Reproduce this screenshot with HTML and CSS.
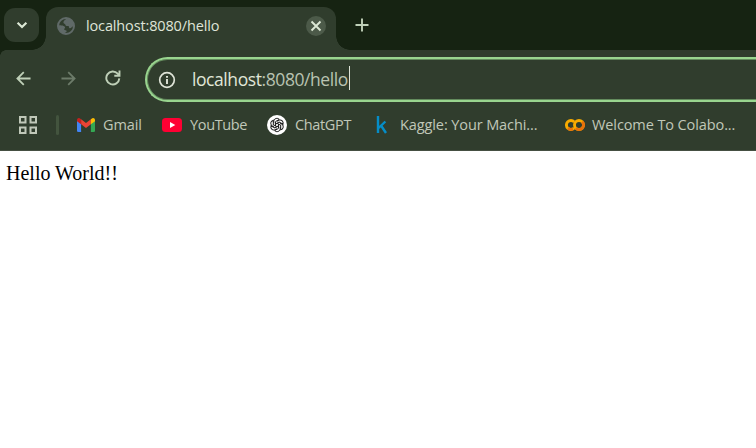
FILE: index.html
```
<!DOCTYPE html>
<html lang="en">
<head>
<meta charset="utf-8">
<title>localhost:8080/hello</title>
<link rel="stylesheet" href="styles.css">
</head>
<body>
<div class="tabstrip">
  <div class="tab-search"><svg width="14" height="14" viewBox="0 0 14 14"><path d="M2.6 4.7 7 9l4.400-4.300" fill="none" stroke="#dce8d5" stroke-width="2.200"/></svg></div>
  <div class="tab">
    <svg class="globe" width="18" height="18" viewBox="0 0 18 18"><circle cx="9" cy="9" r="8" fill="none" stroke="#606a68" stroke-width="2"/><path d="M10.500 1C8 3 6.500 3.500 6.400 5.400c0 1.300 2.100 1 2.100 2.500 0 1.400 2.200.6 3 1.200 1 .8 0 2 1.300 2.200 1.500.2 2-1.800 4.200-2.300C17 4 14 1 10.500 1ZM1 8.200c3 0 7 .2 7.100 2.400 0 1-.9.8-1 1.700-.1 1 2.600.7 2.600 2 0 1.200-2.200 1.100-2.400 2.500C3 16 1 12.500 1 8.200Z" fill="#606a68"/></svg>
    <span class="tab-title">localhost:8080/hello</span>
    <div class="close"><svg width="12" height="12" viewBox="0 0 12 12"><path d="m1.500 1.500 9 9m0-9-9 9" stroke="#dce8d5" stroke-width="1.900"/></svg></div>
  </div>
  <svg class="plus" width="14" height="14" viewBox="0 0 14 14"><path d="M7 .5v13M.5 7h13" stroke="#bfd0b8" stroke-width="1.900"/></svg>
</div>
<div class="toolbar">
  <svg class="nav" width="15" height="15" viewBox="0 0 16 16"><path d="M15.500 8H2M8.300 1.200 1.500 8l6.800 6.800" fill="none" stroke="#bfd0b8" stroke-width="1.900"/></svg>
  <svg class="nav" width="15" height="15" viewBox="0 0 16 16"><path d="M.5 8H14M7.700 1.200 14.500 8l-6.800 6.800" fill="none" stroke="#6c7b69" stroke-width="1.900"/></svg>
  <svg class="nav" width="16" height="16" viewBox="0 0 16 16"><path d="M14.300 8.400A6.500 6.500 0 1 1 12.700 3.700L14.400 5.400M14.500.5V5.800H9.300" fill="none" stroke="#bfd0b8" stroke-width="1.900"/></svg>
  <div class="omnibox">
    <svg width="18" height="18" viewBox="0 0 18 18"><circle cx="9" cy="9" r="7.300" fill="none" stroke="#dfe4d8" stroke-width="1.700"/><path d="M9 8v5M9 5v1.800" stroke="#dfe4d8" stroke-width="1.900"/></svg>
    <span class="url"><b>localhost</b>:8080/hello</span><i class="caret"></i>
  </div>
</div>
<div class="bookmarks">
  <svg class="apps" width="18" height="18" viewBox="0 0 18 18"><path d="M1 1h5.500v5.500H1zM11.500 1H17v5.500h-5.500zM1 11.500h5.500V17H1zM11.500 11.500H17V17h-5.500z" fill="none" stroke="#c0c8b9" stroke-width="2"/></svg>
  <i class="divider"></i>
  <div class="bm gmail"><svg width="18" height="14" viewBox="0 0 18 14"><path d="M0 2.500 4.100 5.500V14H1.300Q0 14 0 12.700Z" fill="#4285f4"/><path d="M13.900 5.500 18 2.500V12.700Q18 14 16.700 14H13.900Z" fill="#34a853"/><path d="M4.100 1.300 9 5l4.900-3.700v5L9 10 4.100 6.300Z" fill="#ea4335"/><path d="M0 2.200C0 .2 2-.5 3.400.7L4.100 1.300v5L0 3.300Z" fill="#c5221f"/><path d="M18 2.200C18 .2 16-.5 14.600.7l-.7.600v5L18 3.300Z" fill="#fbbc04"/></svg><span>Gmail</span></div>
  <div class="bm youtube"><svg width="20" height="14" viewBox="0 0 20 14"><rect width="20" height="14" rx="3.500" fill="#ff0033"/><path d="m8 4 5.300 3L8 10Z" fill="#fff"/></svg><span>YouTube</span></div>
  <div class="bm chatgpt"><svg width="20" height="20" viewBox="-10 -10 20 20"><defs><path id="petal" d="M-3.200-1.700V-4.200A3.200 3.200 0 0 1 2.300-5.600L-1.500-3.400V1.100"/></defs><circle r="10" fill="#fff"/><g fill="none" stroke="#202020" stroke-width="1"><use href="#petal"/><use href="#petal" transform="rotate(60)"/><use href="#petal" transform="rotate(120)"/><use href="#petal" transform="rotate(180)"/><use href="#petal" transform="rotate(240)"/><use href="#petal" transform="rotate(300)"/></g></svg><span>ChatGPT</span></div>
  <div class="bm kaggle"><svg width="11" height="18" viewBox="0 0 11 18"><path d="M2 0V17M9.400 5.500 2.600 12M5 9.500 10 17" fill="none" stroke="#058dc7" stroke-width="2.400"/></svg><span>Kaggle: Your Machi...</span></div>
  <div class="bm colab"><svg width="20" height="12" viewBox="0 0 20 12"><path d="M9.200 9.100A4.500 4.500 0 1 1 9.200 2.900" fill="none" stroke="#f9ab00" stroke-width="2.900"/><circle cx="14" cy="6" r="4.500" fill="none" stroke="#f9ab00" stroke-width="2.900"/><path d="M10.800 9.200A4.500 4.500 0 0 0 17.200 2.800M3 9.200Q5 11 8 10" fill="none" stroke="#e8710a" stroke-width="2.900"/></svg><span>Welcome To Colabo...</span></div>
</div>
<main>Hello World!!</main>
</body>
</html>
```
FILE: styles.css
```
* { box-sizing: border-box; }
body { margin: 0; width: 756px; height: 448px; overflow: hidden; background: #fff; font-family: "Open Sans", "Noto Sans", sans-serif; }
svg { display: block; flex: none; }
.tabstrip { height: 50px; display: flex; align-items: flex-start; background: #162312; }
.tab-search { width: 35px; height: 34px; margin: 8px 7px 0 4px; border-radius: 11px; background: #303d2d; display: flex; align-items: center; justify-content: center; }
.tab { position: relative; width: 290px; height: 43px; margin-top: 7px; padding: 0 10px 6px 11px; display: flex; align-items: center; border-radius: 12px 12px 0 0; background: #303d2d; }
.tab::before, .tab::after { content: ""; position: absolute; bottom: 0; width: 14px; height: 14px; }
.tab::before { left: -14px; background: radial-gradient(circle at 0 0, transparent 13.5px, #303d2d 14px); }
.tab::after { right: -14px; background: radial-gradient(circle at 100% 0, transparent 13.5px, #303d2d 14px); }
.tab-title { margin-left: 11px; color: #dfe4d8; font-size: 14.5px; line-height: 20px; letter-spacing: -0.14px; white-space: nowrap; }
.close { width: 20px; height: 20px; margin-left: auto; border-radius: 50%; background: #4c5a49; display: flex; align-items: center; justify-content: center; }
.plus { margin: 18px 0 0 19px; }
.toolbar { height: 52px; padding: 7px 0 0 16px; display: flex; background: radial-gradient(circle at 6px 6px, #303d2d 5.5px, #162312 6px) 0 0 / 6px 6px no-repeat, #303d2d; }
.nav { margin: 14px 30px 0 0; }
.nav:nth-child(3) { margin: 13px 24px 0 -1px; }
.omnibox { flex: 1; height: 45px; display: flex; align-items: center; padding-left: 11px; border: solid #99d58f; border-width: 2px 0 2px 2px; border-radius: 23px 0 0 23px; box-shadow: inset 0 1px #638b5d, inset 0 -1px #638b5d, inset 1px 0 #638b5d; }
.url { margin: 0 0 2px 16px; color: #b9c3b1; font-size: 17.5px; line-height: 26px; letter-spacing: -0.42px; white-space: nowrap; }
.url b { font-weight: 400; color: #e0e7d8; }
.caret { width: 1px; height: 24px; margin: 0 0 3px 1px; background: #dfe4d8; }
.bookmarks { height: 49px; padding-bottom: 3px; display: flex; align-items: center; background: #303d2d; border-bottom: 1px solid #454f42; }
.apps { margin-left: 19px; }
.divider { width: 3px; height: 20px; margin-left: 19px; border-radius: 2px; background: #43543e; }
.bm { display: flex; align-items: center; color: #c0c8b9; font-size: 14.5px; line-height: 20px; letter-spacing: -0.35px; white-space: nowrap; }
.gmail { width: 85px; margin-left: 18px; gap: 8px; letter-spacing: -0.1px; }
.youtube { width: 105px; gap: 8px; }
.chatgpt { width: 109px; gap: 8px; }
.kaggle { width: 189px; gap: 13px; letter-spacing: -0.1px; }
.colab { gap: 7px; letter-spacing: -0.1px; }
main { padding: 10px 6px; color: #000; font: 20px/24px "Liberation Serif", serif; }
```
